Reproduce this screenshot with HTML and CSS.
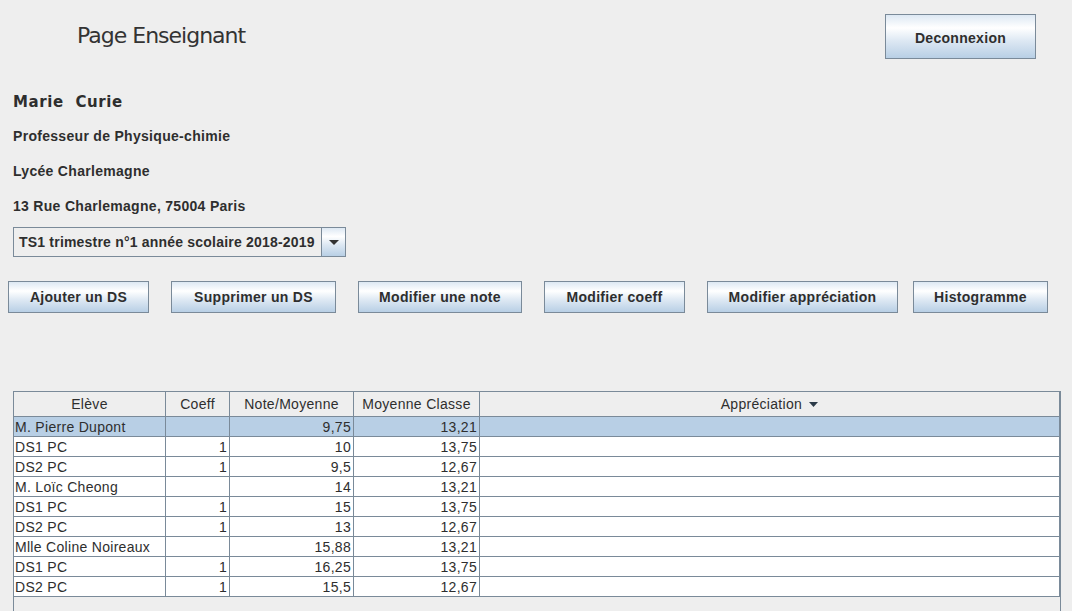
FILE: index.html
```html
<!DOCTYPE html>
<html lang="fr">
<head>
<meta charset="utf-8">
<title>Page Enseignant</title>
<link rel="stylesheet" href="styles.css">
</head>
<body>
<div class="page">
  <header class="topbar">
    <h1 class="title">Page Enseignant</h1>
    <button class="btn btn-logout">Deconnexion</button>
  </header>

  <div class="name">Marie&nbsp;&nbsp;Curie</div>

  <div class="info">
    <div class="info-line">Professeur de Physique-chimie</div>
    <div class="info-line">Lycée Charlemagne</div>
    <div class="info-line">13 Rue Charlemagne, 75004 Paris</div>
  </div>

  <div class="combo">
    <div class="combo-value">TS1 trimestre n°1 année scolaire 2018-2019</div>
    <div class="combo-arrow">
      <svg width="10" height="5" viewBox="0 0 10 5"><polygon points="0,0 10,0 5,5" fill="#333333"/></svg>
    </div>
  </div>

  <div class="actions">
    <button class="btn btn-add">Ajouter un DS</button>
    <button class="btn btn-del">Supprimer un DS</button>
    <button class="btn btn-note">Modifier une note</button>
    <button class="btn btn-coeff">Modifier coeff</button>
    <button class="btn btn-appr">Modifier appréciation</button>
    <button class="btn btn-hist">Histogramme</button>
  </div>

  <div class="scroll">
    <table class="grid">
      <colgroup>
        <col class="c-eleve">
        <col class="c-coeff">
        <col class="c-note">
        <col class="c-moy">
        <col class="c-appr">
      </colgroup>
      <thead>
        <tr>
          <th>Elève</th>
          <th>Coeff</th>
          <th>Note/Moyenne</th>
          <th>Moyenne Classe</th>
          <th>Appréciation <svg class="sort" width="9" height="5" viewBox="0 0 9 5"><polygon points="0,0 9,0 4.5,5" fill="#2b3a48"/></svg></th>
        </tr>
      </thead>
      <tbody>
        <tr class="selected"><td>M. Pierre Dupont</td><td class="num"></td><td class="num">9,75</td><td class="num">13,21</td><td></td></tr>
        <tr><td>DS1 PC</td><td class="num">1</td><td class="num">10</td><td class="num">13,75</td><td></td></tr>
        <tr><td>DS2 PC</td><td class="num">1</td><td class="num">9,5</td><td class="num">12,67</td><td></td></tr>
        <tr><td>M. Loïc Cheong</td><td class="num"></td><td class="num">14</td><td class="num">13,21</td><td></td></tr>
        <tr><td>DS1 PC</td><td class="num">1</td><td class="num">15</td><td class="num">13,75</td><td></td></tr>
        <tr><td>DS2 PC</td><td class="num">1</td><td class="num">13</td><td class="num">12,67</td><td></td></tr>
        <tr><td>Mlle Coline Noireaux</td><td class="num"></td><td class="num">15,88</td><td class="num">13,21</td><td></td></tr>
        <tr><td>DS1 PC</td><td class="num">1</td><td class="num">16,25</td><td class="num">13,75</td><td></td></tr>
        <tr><td>DS2 PC</td><td class="num">1</td><td class="num">15,5</td><td class="num">12,67</td><td></td></tr>
      </tbody>
    </table>
  </div>
</div>
</body>
</html>
```

FILE: styles.css
```css
html, body {
  margin: 0;
  padding: 0;
  height: 100%;
  overflow: hidden;
  background: #eeeeee;
}

body {
  font-family: "Liberation Sans", Arial, sans-serif;
  color: #2e2e2e;
}

.page {
  display: flex;
  flex-direction: column;
}

.topbar {
  display: flex;
  justify-content: space-between;
  align-items: flex-start;
  padding: 14px 36px 0 13px;
}

.title {
  margin: 9px 0 0 64px;
  font-family: "DejaVu Sans", Verdana, sans-serif;
  font-weight: normal;
  font-size: 22px;
  line-height: 26px;
  letter-spacing: -1px;
  color: #333333;
}

.btn {
  box-sizing: border-box;
  height: 32px;
  padding: 0;
  border: 1px solid #7a8a99;
  border-radius: 0;
  background: linear-gradient(to bottom, #dde8f3 0%, #ffffff 30%, #dde8f3 60%, #b8cfe5 100%);
  font-family: "Liberation Sans", Arial, sans-serif;
  font-weight: bold;
  font-size: 14px;
  letter-spacing: 0.3px;
  color: #2e2e2e;
  text-align: center;
}

.btn-logout {
  width: 151px;
  height: 45px;
  padding-top: 2px;
}

.name {
  margin: 33px 0 0 13px;
  font-family: "DejaVu Sans", Verdana, sans-serif;
  font-weight: bold;
  font-size: 15px;
  line-height: 20px;
  letter-spacing: 0.6px;
}

.info {
  margin-top: 7px;
  padding-left: 13px;
}

.info-line {
  font-weight: bold;
  font-size: 14px;
  line-height: 35px;
  letter-spacing: 0.3px;
}

.combo {
  box-sizing: border-box;
  display: flex;
  width: 333px;
  height: 30px;
  margin: 3px 0 0 13px;
  border: 1px solid #7a8a99;
  background: #eeeeee;
}

.combo-value {
  flex: 1;
  padding-left: 5px;
  font-weight: bold;
  font-size: 14px;
  line-height: 28px;
  letter-spacing: 0.2px;
  white-space: nowrap;
}

.combo-arrow {
  box-sizing: border-box;
  width: 24px;
  border-left: 1px solid #7a8a99;
  background: linear-gradient(to bottom, #dde8f3 0%, #ffffff 30%, #dde8f3 60%, #b8cfe5 100%);
  display: flex;
  align-items: center;
  justify-content: center;
  padding-top: 1px;
}

.combo-arrow svg {
  display: block;
}

.actions {
  display: flex;
  gap: 22px;
  margin-top: 24px;
  padding-left: 8px;
}

.btn-add { width: 141px; }
.btn-del { width: 165px; }
.btn-note { width: 164px; }
.btn-coeff { width: 141px; }
.btn-appr { width: 191px; }
.btn-hist { width: 135px; margin-left: -7px; }

.scroll {
  width: 1046px;
  height: 240px;
  margin: 78px 0 0 13px;
  border: 1px solid #7a8a99;
  background: #eeeeee;
}

.grid {
  width: 1046px;
  table-layout: fixed;
  border-collapse: separate;
  border-spacing: 0;
  font-size: 14px;
  letter-spacing: 0.3px;
  color: #2e2e2e;
}

.c-eleve { width: 152px; }
.c-coeff { width: 64px; }
.c-note { width: 124px; }
.c-moy { width: 126px; }
.c-appr { width: 580px; }

.grid th {
  padding: 0;
  font-weight: normal;
  line-height: 24px;
  text-align: center;
  background: #eeeeee;
  border-right: 1px solid #7a8a99;
  border-bottom: 1px solid #7a8a99;
  white-space: nowrap;
}

.grid .sort {
  margin-left: 3px;
  vertical-align: 2px;
}

.grid td {
  padding: 1px 0 0 1px;
  line-height: 18px;
  height: 18px;
  background: #ffffff;
  border-right: 1px solid #7a8a99;
  border-bottom: 1px solid #7a8a99;
  white-space: nowrap;
  overflow: hidden;
}

.grid td.num {
  text-align: right;
  padding-left: 0;
  padding-right: 2px;
}

.grid tr.selected td {
  background: #b8cfe5;
}
```
